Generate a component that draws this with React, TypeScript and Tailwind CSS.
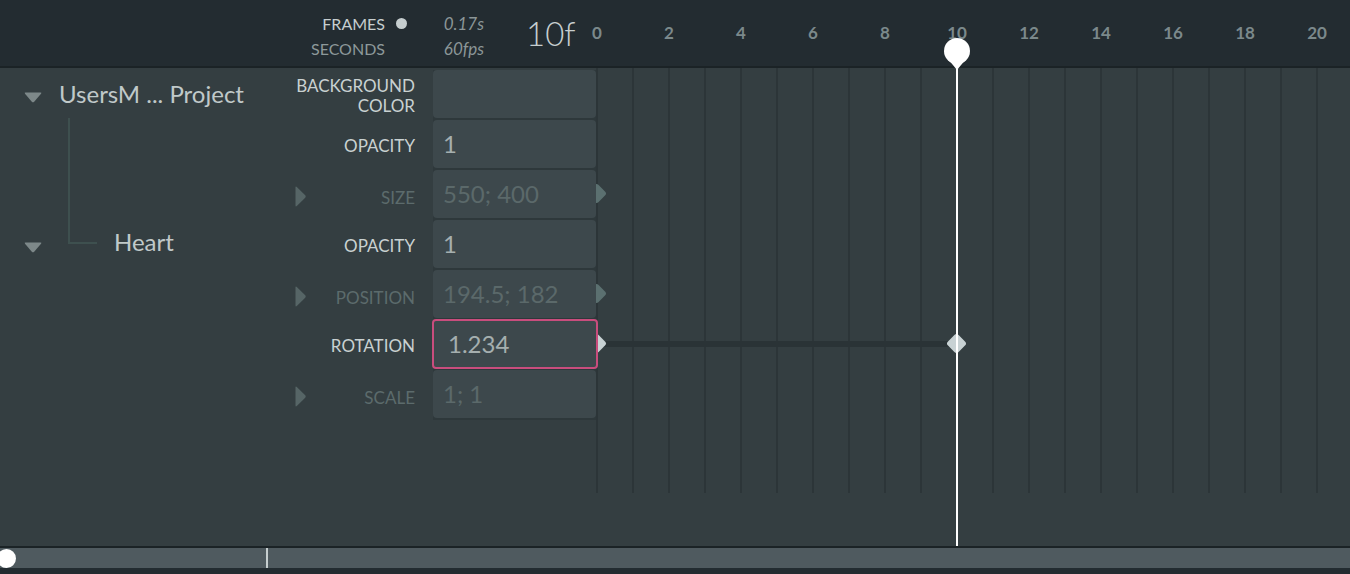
import React from "react";

const rulerLabels = [0, 2, 4, 6, 8, 10, 12, 14, 16, 18, 20];
const columns = Array.from({ length: 21 }, (_, i) => i);

type Prop = {
  label: string[];
  value: string;
  dim?: boolean;
  toggle?: boolean;
  active?: boolean;
  key0?: "teal" | "light";
  track?: boolean;
};

const props: Prop[] = [
  { label: ["BACKGROUND", "COLOR"], value: "" },
  { label: ["OPACITY"], value: "1" },
  { label: ["SIZE"], value: "550; 400", dim: true, toggle: true, key0: "teal" },
  { label: ["OPACITY"], value: "1" },
  { label: ["POSITION"], value: "194.5; 182", dim: true, toggle: true, key0: "teal" },
  { label: ["ROTATION"], value: "1.234", active: true, key0: "light", track: true },
  { label: ["SCALE"], value: "1; 1", dim: true, toggle: true },
];

function DownCaret() {
  return (
    <svg width="18" height="11" viewBox="0 0 18 11" className="relative top-[3px] shrink-0">
      <path d="M1.5 0.5 H16.5 Q18 0.5 17 1.8 L10.2 9.7 Q9 10.9 7.8 9.7 L1 1.8 Q0 0.5 1.5 0.5Z" fill="#7d8889" />
    </svg>
  );
}

function RightCaret() {
  return (
    <svg width="11" height="21" viewBox="0 0 11 21" className="relative top-[2px] shrink-0">
      <path d="M0.5 1.5 Q0.5 0 1.8 1 L10.2 9.3 Q11.2 10.5 10.2 11.7 L1.8 20 Q0.5 21 0.5 19.5Z" fill="#566566" />
    </svg>
  );
}

export default function App() {
  return (
    <div className="relative flex h-[574px] w-[1350px] flex-col overflow-hidden bg-[#343e41] font-['Lato','Liberation_Sans',sans-serif]">
      {/* header */}
      <div className="flex h-[68px] shrink-0 border-b-2 border-[#1b2326] bg-[#232c31]">
        <div className="flex w-[597px] shrink-0">
          <div className="flex w-[407px] flex-col items-end pt-[11px] text-[16px] leading-[25px]">
            <div className="flex items-center text-[#c6cecf]">
              FRAMES
              <span className="ml-[11px] h-[11px] w-[11px] rounded-full bg-[#c6cecf]" />
            </div>
            <div className="mr-[22px] text-[#8d999a]">SECONDS</div>
          </div>
          <div className="flex w-[77px] flex-col items-end pt-[11px] text-[17px] italic leading-[25px] text-[#8b9697]">
            <div>0.17s</div>
            <div>60fps</div>
          </div>
          <div className="ml-[42px] self-center whitespace-nowrap text-[33px] font-light leading-none text-[#c6cecf]">
            10f
          </div>
        </div>
        <div className="-ml-[36px] flex items-center">
          {rulerLabels.map((n) => (
            <span key={n} className="w-[72px] shrink-0 text-center text-[17px] font-bold text-[#7b898b]">
              {n}
            </span>
          ))}
        </div>
      </div>

      {/* body */}
      <div className="flex min-h-0 flex-1">
        {/* tree */}
        <div className="w-[290px] shrink-0 pt-[2px] text-[24px] text-[#c0c9c9]">
          <div className="flex h-[48px] items-center pl-[24px]">
            <DownCaret />
            <span className="ml-[17px] whitespace-nowrap">UsersM ... Project</span>
          </div>
          <div className="ml-[68px] h-[102px] border-l-2 border-[#3e504f]" />
          <div className="flex h-[48px] items-center pl-[24px]">
            <DownCaret />
            <div className="ml-[26px] h-[24px] w-[29px] self-start border-b-2 border-l-2 border-[#3e504f]" />
            <span className="relative top-[-2px] ml-[17px]">Heart</span>
          </div>
        </div>

        {/* properties */}
        <div className="flex w-[306px] shrink-0 flex-col pt-[2px]">
          {props.map((p, i) => (
            <div key={i} className="flex h-[50px] shrink-0">
              <div className="flex w-[16px] shrink-0 items-center justify-end pb-[2px]">
                {p.toggle && <RightCaret />}
              </div>
              <div
                className={`relative flex min-w-0 flex-1 flex-col items-end justify-center whitespace-nowrap pb-[2px] text-[17px] leading-[20px] ${
                  p.dim ? "top-[4px] text-[#5c6b6c]" : "top-[2px] text-[#c9d1d1]"
                }`}
              >
                {p.label.map((l) => (
                  <div key={l}>{l}</div>
                ))}
              </div>
              <div className="ml-[18px] w-[163px] shrink-0 bg-[#2e383b] pb-[2px]">
                <div
                  className={`relative flex h-[48px] items-center rounded-[4px] bg-[#3d484c] pl-[10px] text-[24px] ${
                    p.dim ? "text-[#5b696a]" : "text-[#a5afaf]"
                  } ${
                    p.active
                      ? "z-10 -my-px -ml-px h-[50px] w-[166px] border-2 border-[#c94d7d] pl-[14px]"
                      : "w-[163px]"
                  }`}
                >
                  {p.value}
                </div>
              </div>
            </div>
          ))}
        </div>

        {/* timeline */}
        <div className="relative flex-1 overflow-hidden">
          <div className="flex h-[425px] border-l-2 border-[#2c3538]">
            {columns.map((c) => (
              <div key={c} className="w-[36px] shrink-0 border-r-2 border-[#2c3538]" />
            ))}
          </div>
          <div className="absolute inset-0 flex flex-col gap-[2px] pt-[2px]">
            {props.map((p, i) => (
              <div key={i} className="relative h-[48px] shrink-0">
                {p.track && <div className="absolute left-0 top-[21px] h-[6px] w-[361px] bg-[#2a3336]" />}
                {p.key0 && (
                  <div
                    className={`absolute left-[-7px] top-[16px] h-[15px] w-[15px] rotate-45 rounded-[3px] ${
                      p.key0 === "teal" ? "bg-[#5b7070]" : "bg-[#c8d2d4]"
                    }`}
                  />
                )}
                {p.track && (
                  <div className="absolute left-[353px] top-[16px] h-[15px] w-[15px] rotate-45 rounded-[3px] bg-[#c8d2d4]" />
                )}
              </div>
            ))}
          </div>
        </div>
      </div>

      {/* scrollbar */}
      <div className="shrink-0 border-t-2 border-[#1b2326]">
        <div className="relative h-[20px] bg-[#4f5a5f]">
          <div className="absolute left-[-3px] top-[0.5px] h-[19px] w-[19px] rounded-full bg-white" />
          <div className="absolute left-[266px] top-0 h-[20px] w-[2px] bg-[#c6cecf]" />
        </div>
        <div className="h-[6px] bg-[#232c31]" />
      </div>

      {/* playhead */}
      <div className="pointer-events-none absolute left-[944px] top-[38px] flex w-[26px] flex-col items-center">
        <svg width="26" height="32" viewBox="0 0 26 32">
          <circle cx="13" cy="13" r="13" fill="#ffffff" />
          <path d="M4 21 L22 21 L13 32 Z" fill="#ffffff" />
        </svg>
        <div className="-mt-[4px] h-[480px] w-[2px] bg-white" />
      </div>
    </div>
  );
}
